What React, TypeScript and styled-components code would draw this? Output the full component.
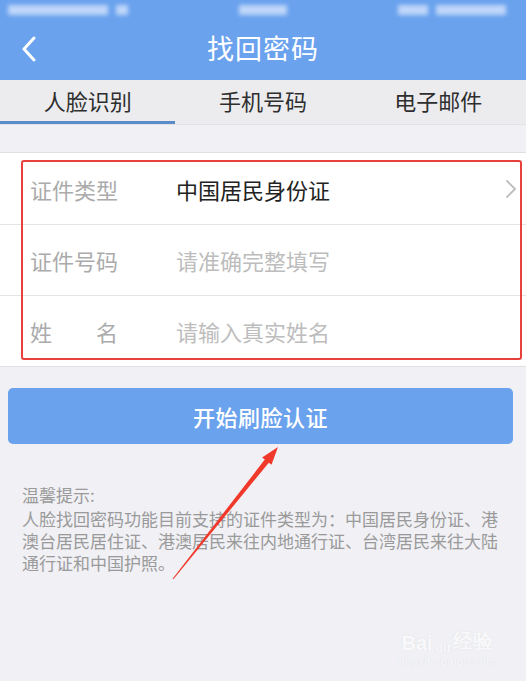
import React from "react";
import styled, { createGlobalStyle } from "styled-components";

const GlobalStyle = createGlobalStyle`
  html, body {
    margin: 0;
    padding: 0;
    background: #f0f0f5;
  }
  * {
    box-sizing: border-box;
  }
  body {
    font-family: "Noto Sans CJK SC", "Noto Sans", sans-serif;
  }
`;

const tabs = ["人脸识别", "手机号码", "电子邮件"];

const fields = [
  { label: "证件类型", value: "中国居民身份证", filled: true, arrow: true },
  { label: "证件号码", value: "请准确完整填写", filled: false, arrow: false },
  { label: "姓名", value: "请输入真实姓名", filled: false, arrow: false },
];

export default function App() {
  return (
    <>
      <GlobalStyle />
      <Page>
        <Header>
          <StatusBar>
            <Blur style={{ width: 100 }} />
            <Blur style={{ width: 12 }} />
            <Spacer />
            <Blur style={{ width: 48 }} />
            <Spacer />
            <Blur style={{ width: 30 }} />
            <Blur style={{ width: 70 }} />
          </StatusBar>
          <NavBar>
            <BackButton>
              <svg width="18" height="26" viewBox="0 0 18 26" fill="none">
                <path
                  d="M14 2L4 13L14 24"
                  stroke="#ffffff"
                  strokeWidth="3"
                  strokeLinecap="round"
                  strokeLinejoin="round"
                />
              </svg>
            </BackButton>
            <Title>找回密码</Title>
          </NavBar>
        </Header>

        <TabBar>
          {tabs.map((t, i) => (
            <Tab key={t} active={i === 0}>
              {t}
            </Tab>
          ))}
        </TabBar>

        <Card>
          {fields.map((f) => (
            <Row key={f.label}>
              <Label>{f.label}</Label>
              <Value filled={f.filled}>{f.value}</Value>
              {f.arrow && (
                <svg width="12" height="20" viewBox="0 0 12 20" fill="none">
                  <path
                    d="M2 2L10 10L2 18"
                    stroke="#bdbdbd"
                    strokeWidth="1.8"
                    strokeLinecap="round"
                    strokeLinejoin="round"
                  />
                </svg>
              )}
            </Row>
          ))}
          <Highlight />
        </Card>

        <ActionButton>开始刷脸认证</ActionButton>

        <Tips>
          <TipTitle>温馨提示:</TipTitle>
          <TipBody>
            人脸找回密码功能目前支持的证件类型为：中国居民身份证、港澳台居民居住证、港澳居民来往内地通行证、台湾居民来往大陆通行证和中国护照。
          </TipBody>
        </Tips>

        <Pointer width="526" height="681" viewBox="0 0 526 681">
          <polygon
            points="173.4,579.3 268.8,462.7 271.5,464.8 278,447 262.1,457.4 264.8,459.5 172.6,578.7"
            fill="#f0392b"
          />
        </Pointer>

        <Watermark>
          <Brand>
            Bai<Paw>du</Paw>经验
          </Brand>
          <Site>jingyan.baidu.com</Site>
        </Watermark>
      </Page>
    </>
  );
}

const Page = styled.div`
  position: relative;
  width: 526px;
  min-height: 681px;
  background: #f0f0f5;
  overflow: hidden;
`;

const Header = styled.div`
  background: #6aa2ee;
  height: 80px;
  display: flex;
  flex-direction: column;
`;

const StatusBar = styled.div`
  display: flex;
  align-items: center;
  gap: 8px;
  height: 20px;
  padding: 0 20px 0 8px;
`;

const Blur = styled.div`
  height: 10px;
  background: rgba(220, 232, 252, 0.75);
  filter: blur(2px);
`;

const Spacer = styled.div`
  flex: 1;
`;

const NavBar = styled.div`
  position: relative;
  flex: 1;
  display: flex;
  align-items: center;
  justify-content: center;
  padding-bottom: 6px;
`;

const BackButton = styled.div`
  position: absolute;
  left: 20px;
  top: 16px;
  display: flex;
`;

const Title = styled.div`
  color: #ffffff;
  font-size: 27px;
  letter-spacing: 1px;
`;

const TabBar = styled.div`
  display: grid;
  grid-template-columns: repeat(3, 1fr);
  height: 45px;
  background: #ececee;
  border-bottom: 1px solid #e2e2e6;
`;

const Tab = styled.div<{ active: boolean }>`
  display: flex;
  align-items: center;
  justify-content: center;
  font-size: 22px;
  color: #2e2e2e;
  padding-bottom: 2px;
  border-bottom: 3px solid ${(p) => (p.active ? "#5a8cca" : "transparent")};
`;

const Card = styled.div`
  position: relative;
  margin-top: 27px;
  background: #ffffff;
  border-top: 1px solid #e0e0e4;
  border-bottom: 1px solid #e0e0e4;
`;

const Row = styled.div`
  display: flex;
  align-items: center;
  height: 71px;
  padding: 0 9px 0 30px;
  & + & {
    border-top: 1px solid #e4e4e8;
  }
`;

const Label = styled.div`
  width: 88px;
  margin-right: 58px;
  font-size: 22px;
  color: #ababab;
  text-align: justify;
  text-align-last: justify;
`;

const Value = styled.div<{ filled: boolean }>`
  flex: 1;
  font-size: 22px;
  color: ${(p) => (p.filled ? "#222222" : "#bdbdbd")};
`;

const Highlight = styled.div`
  position: absolute;
  left: 21px;
  top: 7px;
  width: 501px;
  height: 200px;
  border: 2.5px solid #e8403a;
  border-radius: 3px;
  pointer-events: none;
`;

const ActionButton = styled.button`
  display: block;
  width: 505px;
  height: 56px;
  margin: 21px 0 0 8px;
  border: none;
  border-radius: 5px;
  background: #6aa2ee;
  color: #ffffff;
  font-family: "Noto Sans CJK SC", "Noto Sans", sans-serif;
  font-size: 22px;
  font-weight: 500;
  letter-spacing: 0.5px;
`;

const Tips = styled.div`
  width: 482px;
  margin: 40px 0 0 22px;
  display: flex;
  flex-direction: column;
  gap: 2px;
  font-size: 17px;
  line-height: 22px;
  color: #9a9a9a;
`;

const TipTitle = styled.p`
  margin: 0;
`;

const TipBody = styled.p`
  margin: 0;
`;

const Pointer = styled.svg`
  position: absolute;
  left: 0;
  top: 0;
  pointer-events: none;
`;

const Watermark = styled.div`
  position: absolute;
  right: 30px;
  bottom: 14px;
  display: flex;
  flex-direction: column;
  align-items: center;
  color: rgba(255, 255, 255, 0.85);
  font-family: "Liberation Sans", sans-serif;
`;

const Brand = styled.div`
  font-size: 20px;
  font-weight: bold;
  display: flex;
  align-items: flex-end;
  text-shadow: 0 0 1px rgba(200, 200, 210, 0.6);
`;

const Paw = styled.span`
  font-size: 12px;
  padding: 0 3px;
`;

const Site = styled.div`
  font-size: 11px;
  letter-spacing: 0.5px;
  text-shadow: 0 0 1px rgba(200, 200, 210, 0.6);
`;
